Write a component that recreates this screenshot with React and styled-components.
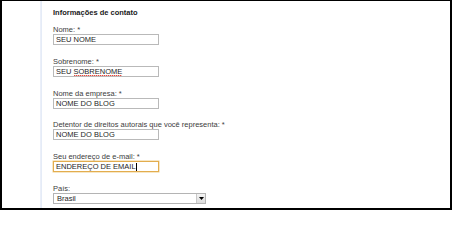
import styled, { createGlobalStyle } from 'styled-components';

const GlobalStyle = createGlobalStyle`
    html, body {
        margin: 0;
        padding: 0;
        background: #ffffff;
    }
`;

const Frame = styled.div`
    box-sizing: border-box;
    width: 452px;
    height: 210px;
    display: flex;
    background: #ffffff;
    border: solid #000000;
    border-width: 1px 2px 2px 2px;
    overflow: hidden;
    font-family: "Liberation Sans", Arial, sans-serif;
`;

const Gutter = styled.div`
    flex: 0 0 38px;
`;

const Divider = styled.div`
    flex: 0 0 2px;
    background: linear-gradient(to right, #eef2fa, #e2e9f6);
`;

const Content = styled.div`
    flex: 1 1 auto;
    padding: 7.3px 0 0 11px;
    display: flex;
    flex-direction: column;
`;

const Heading = styled.div`
    font-size: 7.5px;
    line-height: 10px;
    font-weight: bold;
    color: #1a1a1a;
    margin-bottom: 6.7px;
`;

const Fields = styled.div`
    display: flex;
    flex-direction: column;
    gap: 11.8px;
`;

const Field = styled.div`
    display: flex;
    flex-direction: column;
`;

const Label = styled.div`
    font-size: 7.5px;
    line-height: 9px;
    color: #3c3c3c;
`;

const TextBox = styled.div`
    box-sizing: border-box;
    width: 106px;
    height: 11px;
    padding: 0 2px;
    border: 1px solid ${p => (p.$focused ? '#e3ad4e' : '#b9b9b9')};
    box-shadow: ${p => (p.$focused ? '0 0 0 0.5px #f0cf8e' : 'none')};
    background: #ffffff;
    font-size: 7.5px;
    line-height: 9px;
    color: #1e1e1e;
    white-space: pre;
`;

/* spell-check squiggle drawn as a dotted red line under the word */
const Misspelled = styled.span`
    display: inline-block;
    line-height: 9px;
    background-image: repeating-linear-gradient(to right, #e64a3e 0 1px, rgba(230, 74, 62, 0.35) 1px 2px);
    background-size: 100% 1px;
    background-position: 0 8.5px;
    background-repeat: no-repeat;
`;

const Caret = styled.span`
    display: inline-block;
    width: 1px;
    height: 8px;
    margin-left: 0.5px;
    vertical-align: -1.5px;
    background: #000000;
`;

const SelectBox = styled.div`
    box-sizing: border-box;
    width: 153px;
    height: 11px;
    display: flex;
    align-items: stretch;
    border: 1px solid #b4b4b4;
    background: #ffffff;
    font-size: 7.5px;
    line-height: 9px;
    color: #1e1e1e;
`;

const SelectValue = styled.div`
    flex: 1 1 auto;
    padding: 0 3px;
`;

const SelectArrow = styled.div`
    flex: 0 0 9px;
    box-sizing: border-box;
    border-left: 1px solid #c8c8c8;
    background: linear-gradient(#f4f4f4, #dcdcdc);
    display: flex;
    align-items: center;
    justify-content: center;
`;

function DownTriangle() {
    return (
        <svg width="5" height="3" viewBox="0 0 5 3">
            <path d="M0 0 L5 0 L2.5 3 Z" fill="#000000" />
        </svg>
    );
}

const kFields = [
    { label: 'Nome: *', value: 'SEU NOME' },
    { label: 'Sobrenome: *', value: 'SEU ', misspelled: 'SOBRENOME' },
    { label: 'Nome da empresa: *', value: 'NOME DO BLOG' },
    { label: 'Detentor de direitos autorais que você representa: *', value: 'NOME DO BLOG' },
    { label: 'Seu endereço de e-mail: *', value: 'ENDEREÇO DE EMAIL', focused: true },
];

function App() {
    return (
        <>
            <GlobalStyle />
            <Frame>
                <Gutter />
                <Divider />
                <Content>
                    <Heading>Informações de contato</Heading>
                    <Fields>
                        {kFields.map((f, idx) => (
                            <Field key={idx}>
                                <Label>{f.label}</Label>
                                <TextBox $focused={f.focused}>
                                    {f.value}
                                    {f.misspelled && <Misspelled>{f.misspelled}</Misspelled>}
                                    {f.focused && <Caret />}
                                </TextBox>
                            </Field>
                        ))}
                        <Field>
                            <Label>País:</Label>
                            <SelectBox>
                                <SelectValue>Brasil</SelectValue>
                                <SelectArrow>
                                    <DownTriangle />
                                </SelectArrow>
                            </SelectBox>
                        </Field>
                    </Fields>
                </Content>
            </Frame>
        </>
    );
}

export default App;
